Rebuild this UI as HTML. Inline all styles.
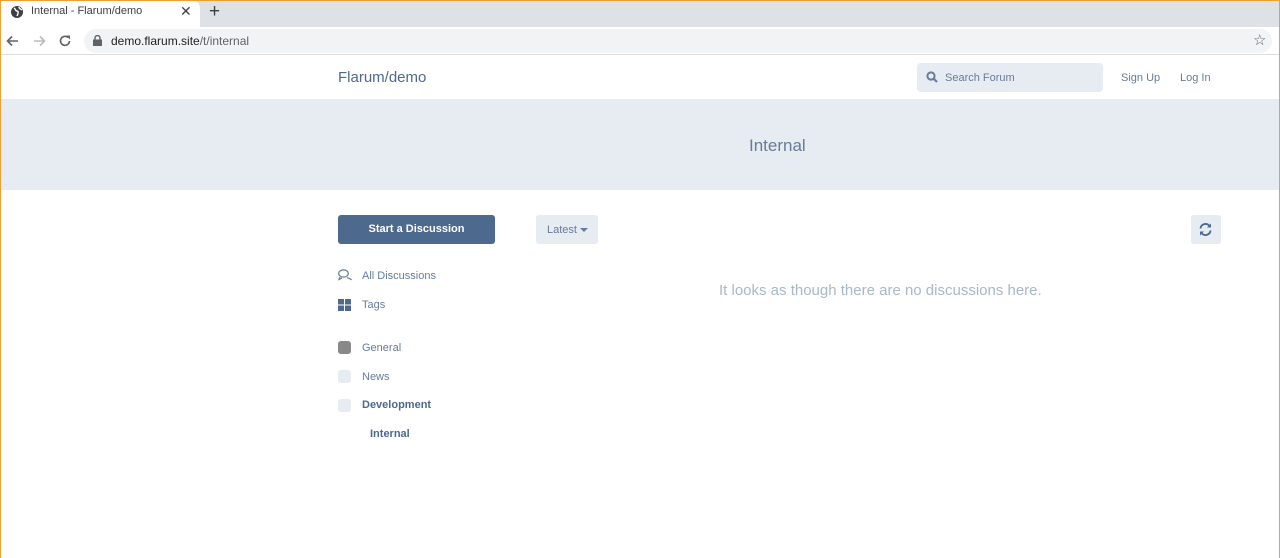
<!DOCTYPE html>
<html><head><meta charset="utf-8"><style>
*{box-sizing:border-box;margin:0;padding:0}
body{width:1280px;height:558px;position:relative;overflow:hidden;background:#fff;font-family:"Liberation Sans",sans-serif}
.abs{position:absolute}
.tabbar{left:0;top:0;width:1280px;height:27px;background:#dee1e6}
.tab{left:0;top:0;width:200px;height:27px;background:#fff;border-radius:0 8px 0 0}
.addr{left:0;top:27px;width:1280px;height:28px;background:#fff;border-bottom:1px solid #dadce0}
.omni{left:84px;top:29px;width:1188px;height:24px;background:#f1f3f4;border-radius:12px}
.t{position:absolute;white-space:nowrap}
.hero{left:0;top:99px;width:1280px;height:91px;background:#e7ebf2}
</style></head><body>
<div class="abs tabbar"></div>
<div class="abs tab"></div>
<svg class="abs" style="left:10px;top:5px" width="14" height="14" viewBox="0 0 14 14"><circle cx="7" cy="7" r="6" fill="#3c4043"/><path d="M4 3c2 1 1 3 3 3s1 3 0 5M9 2c0 2 2 2 3 3" stroke="#fff" stroke-width="1.4" fill="none"/></svg>
<div class="t" style="left:31px;top:5px;font-size:11px;color:#3c4043">Internal - Flarum/demo</div>
<div class="t" style="left:180px;top:3px;font-size:14px;color:#3c4043">✕</div>
<div class="t" style="left:209px;top:1px;font-size:19px;color:#3c4043">+</div>
<div class="abs addr"></div>
<div class="abs omni"></div>
<svg class="abs" style="left:5px;top:33px" width="16" height="16" viewBox="0 0 16 16"><path d="M13 8H3M7 3.5L2.5 8 7 12.5" stroke="#5f6368" stroke-width="1.6" fill="none"/></svg>
<svg class="abs" style="left:31px;top:33px" width="16" height="16" viewBox="0 0 16 16"><path d="M3 8h10M9 3.5L13.5 8 9 12.5" stroke="#bbb" stroke-width="1.6" fill="none"/></svg>
<svg class="abs" style="left:57px;top:33px" width="16" height="16" viewBox="0 0 16 16"><path d="M12.5 8A4.5 4.5 0 1 1 11 4.5" stroke="#5f6368" stroke-width="1.6" fill="none"/><path d="M9 2.5h4v4z" fill="#5f6368"/></svg>
<svg class="abs" style="left:93px;top:35px" width="9" height="11" viewBox="0 0 9 11"><rect x="0" y="4.5" width="9" height="6.5" fill="#5f6368"/><path d="M2 5V3a2.5 2.5 0 0 1 5 0v2" stroke="#5f6368" stroke-width="1.4" fill="none"/></svg>
<div class="t" style="left:111px;top:34px;font-size:12px;color:#202124">demo.flarum.site<span style="color:#5f6368">/t/internal</span></div>
<div class="t" style="left:1253px;top:31px;font-size:15px;color:#5f6368">☆</div>

<div class="t" style="left:338px;top:69px;font-size:15px;color:#4d698e">Flarum/demo</div>
<div class="abs" style="left:917px;top:63px;width:186px;height:29px;background:#e7ebf2;border-radius:4px"></div>
<svg class="abs" style="left:926px;top:71px" width="12" height="12" viewBox="0 0 12 12"><circle cx="5" cy="5" r="3.6" stroke="#667c99" stroke-width="2" fill="none"/><path d="M7.5 7.5L11 11" stroke="#667c99" stroke-width="2.2"/></svg>
<div class="t" style="left:945px;top:72px;font-size:11px;color:#667c99">Search Forum</div>
<div class="t" style="left:1121px;top:72px;font-size:11px;color:#667c99">Sign Up</div>
<div class="t" style="left:1180px;top:72px;font-size:11px;color:#667c99">Log In</div>

<div class="abs hero"></div>
<div class="t" style="left:749px;top:136px;font-size:17px;color:#667c99">Internal</div>

<div class="abs" style="left:338px;top:215px;width:157px;height:29px;background:#4d698e;border-radius:3px"></div>
<div class="t" style="left:338px;top:223px;width:157px;text-align:center;font-size:11px;font-weight:bold;color:#fff">Start a Discussion</div>
<div class="abs" style="left:536px;top:215px;width:62px;height:29px;background:#e7ebf2;border-radius:3px"></div>
<div class="t" style="left:547px;top:224px;font-size:11px;color:#667c99">Latest</div>
<div class="abs" style="left:580px;top:228px;border-left:4px solid transparent;border-right:4px solid transparent;border-top:4px solid #667c99"></div>
<div class="abs" style="left:1191px;top:215px;width:30px;height:29px;background:#e7ebf2;border-radius:3px"></div>
<svg class="abs" style="left:1198px;top:222px" width="15" height="15" viewBox="0 0 15 15"><path d="M2.5 6.5A5 5 0 0 1 11.5 4M12.5 8.5A5 5 0 0 1 3.5 11" stroke="#4d698e" stroke-width="1.8" fill="none"/><path d="M13 1.5v4h-4zM2 13.5v-4h4z" fill="#4d698e"/></svg>

<svg class="abs" style="left:338px;top:269px" width="15" height="13" viewBox="0 0 15 13"><ellipse cx="5.5" cy="4.5" rx="4.8" ry="3.6" stroke="#667c99" stroke-width="1.2" fill="none"/><path d="M9 8.5c2 1 3.5 1 4.5 2.5M2 8l-1 2.5 3-1.5" stroke="#667c99" stroke-width="1.2" fill="none"/></svg>
<div class="t" style="left:362px;top:270px;font-size:11px;color:#667c99">All Discussions</div>
<svg class="abs" style="left:338px;top:299px" width="13" height="12" viewBox="0 0 13 12"><rect x="0" y="0" width="6" height="5.5" fill="#4d698e"/><rect x="7" y="0" width="6" height="5.5" fill="#4d698e"/><rect x="0" y="6.5" width="6" height="5.5" fill="#4d698e"/><rect x="7" y="6.5" width="6" height="5.5" fill="#4d698e"/></svg>
<div class="t" style="left:362px;top:299px;font-size:11px;color:#667c99">Tags</div>
<div class="abs" style="left:338px;top:341px;width:13px;height:13px;background:#888;border-radius:3px"></div>
<div class="t" style="left:362px;top:342px;font-size:11px;color:#667c99">General</div>
<div class="abs" style="left:338px;top:370px;width:13px;height:13px;background:#e7ebf2;border-radius:3px"></div>
<div class="t" style="left:362px;top:371px;font-size:11px;color:#667c99">News</div>
<div class="abs" style="left:338px;top:399px;width:13px;height:13px;background:#e7ebf2;border-radius:3px"></div>
<div class="t" style="left:362px;top:399px;font-size:11px;font-weight:bold;color:#4d698e">Development</div>
<div class="t" style="left:370px;top:428px;font-size:11px;font-weight:bold;color:#4d698e">Internal</div>

<div class="t" style="left:719px;top:282px;font-size:15px;color:#aab7c8">It looks as though there are no discussions here.</div>
<div class="abs" style="left:0;top:0;width:1280px;height:558px;border:1px solid #f0a030;border-bottom:none"></div>
</body></html>
